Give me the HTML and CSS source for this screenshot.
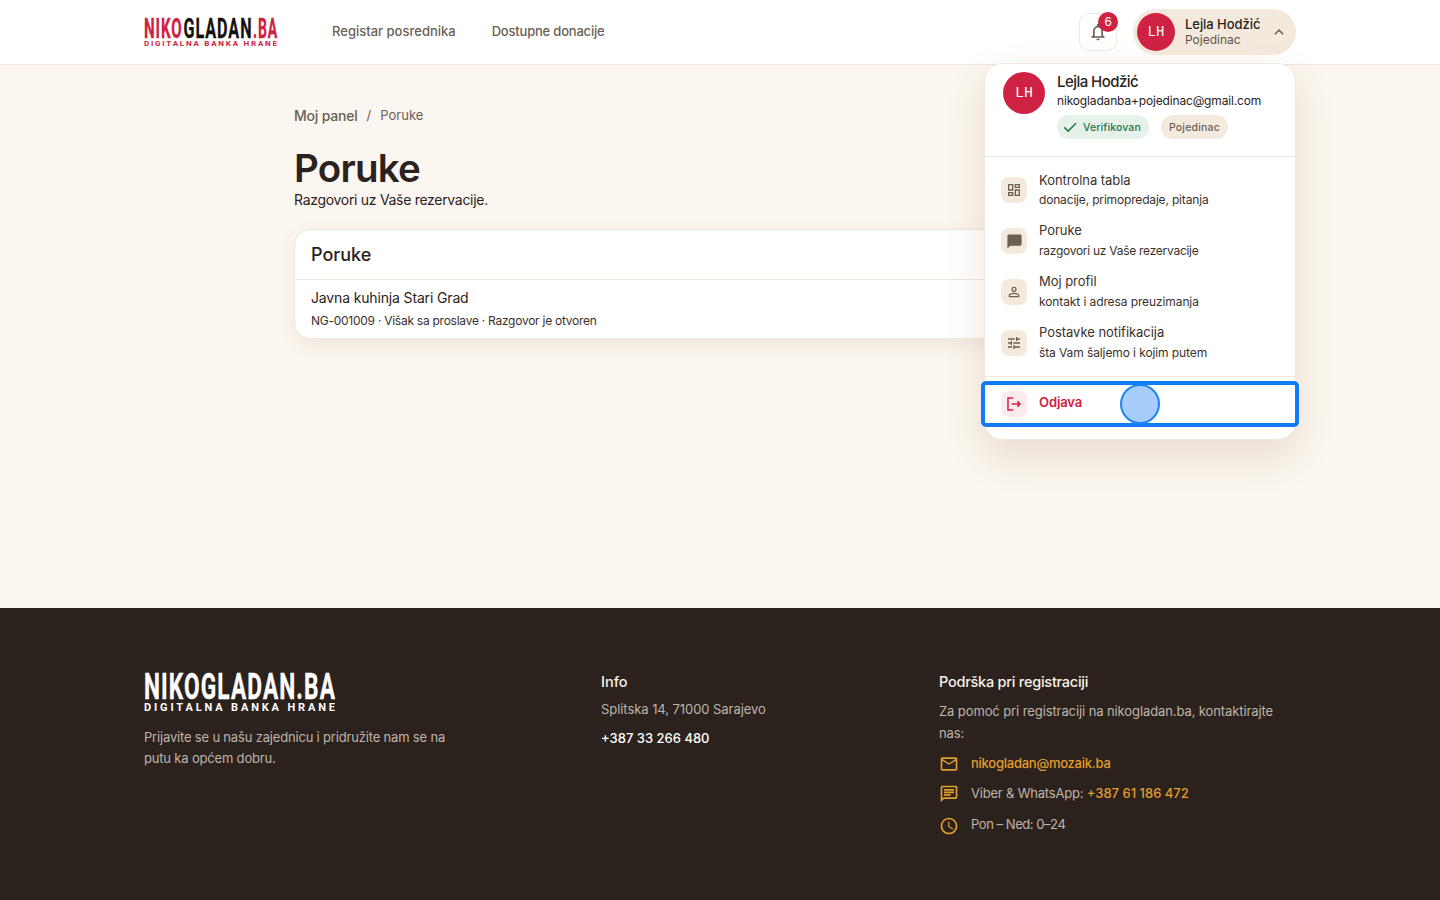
FILE: index.html
```html
<!DOCTYPE html>
<html lang="bs">
<head>
<meta charset="utf-8">
<title>Poruke</title>
<link rel="stylesheet" href="styles.css">
</head>
<body>
<header class="topbar">
  <div class="topbar-inner">
    <svg class="logo-top" width="136" height="44" viewBox="0 0 136 44">
      <text class="lg-main lg-red" x="0" y="27.500" textLength="38.500" lengthAdjust="spacingAndGlyphs">NIKO</text>
      <text class="lg-main lg-black" x="39.500" y="27.500" textLength="69" lengthAdjust="spacingAndGlyphs">GLADAN</text>
      <text class="lg-main lg-red" x="109" y="27.500" textLength="25" lengthAdjust="spacingAndGlyphs">.BA</text>
      <text class="lg-sub lg-red" x="0" y="35.700" textLength="133" lengthAdjust="spacing">DIGITALNA BANKA HRANE</text>
    </svg>
    <nav class="mainnav">
      <a>Registar posrednika</a>
      <a>Dostupne donacije</a>
    </nav>
    <div class="spacer"></div>
    <button class="bell">
      <svg width="20" height="20" viewBox="0 0 24 24"><path fill="#6b5f56" d="M12 22c1.100 0 2-.9 2-2h-4c0 1.100.9 2 2 2zm6-6v-5c0-3.070-1.630-5.640-4.500-6.320V4c0-.830-.670-1.500-1.500-1.500s-1.500.670-1.500 1.500v.680C7.640 5.360 6 7.920 6 11v5l-2 2v1h16v-1l-2-2zm-2 1H8v-6c0-2.480 1.510-4.500 4-4.500s4 2.020 4 4.500v6z"/></svg>
      <span class="badge">6</span>
    </button>
    <div class="userchip">
      <span class="avatar avatar-sm">LH</span>
      <span class="chip-text"><b>Lejla Hodžić</b><span>Pojedinac</span></span>
      <svg width="18" height="18" viewBox="0 0 24 24"><path fill="none" stroke="#6b5f56" stroke-width="2" d="M6.500 15l5.500-5.500 5.500 5.500"/></svg>
    </div>
  </div>
</header>

<main class="content">
  <div class="crumbs"><b>Moj panel</b><i>/</i><span>Poruke</span></div>
  <h1>Poruke</h1>
  <p class="lead">Razgovori uz Vaše rezervacije.</p>
  <section class="card">
    <h2>Poruke</h2>
    <div class="row">
      <h3>Javna kuhinja Stari Grad</h3>
      <p>NG-001009 · Višak sa proslave · Razgovor je otvoren</p>
    </div>
  </section>
</main>

<div class="menu">
  <div class="menu-head">
    <span class="avatar avatar-lg">LH</span>
    <div class="menu-id">
      <div class="menu-name">Lejla Hodžić</div>
      <div class="menu-mail">nikogladanba+pojedinac@gmail.com</div>
      <div class="pills">
        <span class="pill pill-green"><svg width="18" height="18" viewBox="0 0 24 24"><path fill="none" stroke="#23774f" stroke-width="2" d="M4.500 12.500l5 5L20 7"/></svg>Verifikovan</span>
        <span class="pill pill-sand">Pojedinac</span>
      </div>
    </div>
  </div>
  <div class="menu-list">
    <a class="item">
      <span class="ico"><svg width="16" height="16" viewBox="0 0 24 24"><path fill="#6b5f56" d="M19 5v2h-4V5h4M9 5v6H5V5h4m10 8v6h-4v-6h4M9 17v2H5v-2h4M21 3h-8v6h8V3zM11 3H3v10h8V3zm10 8h-8v10h8V11zm-10 4H3v6h8v-6z"/></svg></span>
      <span class="item-text"><b>Kontrolna tabla</b><small>donacije, primopredaje, pitanja</small></span>
    </a>
    <a class="item">
      <span class="ico"><svg width="17" height="17" viewBox="0 0 24 24"><path fill="#6b5f56" d="M20 2H4c-1.100 0-2 .9-2 2v18l4-4h14c1.100 0 2-.9 2-2V4c0-1.100-.9-2-2-2z"/></svg></span>
      <span class="item-text"><b>Poruke</b><small class="tight">razgovori uz Vaše rezervacije</small></span>
    </a>
    <a class="item">
      <span class="ico"><svg width="16" height="16" viewBox="0 0 24 24"><path fill="#6b5f56" d="M12 5.900a2.100 2.100 0 1 1 0 4.200 2.100 2.100 0 0 1 0-4.200m0 9c2.970 0 6.100 1.460 6.100 2.100v1.100H5.900V17c0-.640 3.130-2.100 6.100-2.100M12 4C9.790 4 8 5.790 8 8s1.790 4 4 4 4-1.790 4-4-1.790-4-4-4zm0 9c-2.670 0-8 1.340-8 4v3h16v-3c0-2.660-5.330-4-8-4z"/></svg></span>
      <span class="item-text"><b>Moj profil</b><small class="loose">kontakt i adresa preuzimanja</small></span>
    </a>
    <a class="item">
      <span class="ico"><svg width="16" height="16" viewBox="0 0 24 24"><path fill="#6b5f56" d="M3 17v2h6v-2H3zM3 5v2h10V5H3zm10 16v-2h8v-2h-8v-2h-2v6h2zM7 9v2H3v2h4v2h2V9H7zm14 4v-2H11v2h10zm-6-4h2V7h4V5h-4V3h-2v6z"/></svg></span>
      <span class="item-text"><b>Postavke notifikacija</b><small class="loose">šta Vam šaljemo i kojim putem</small></span>
    </a>
  </div>
  <div class="menu-foot">
    <a class="item item-logout">
      <span class="ico ico-red"><svg width="18" height="18" viewBox="0 0 24 24"><path fill="none" stroke="#cf2142" stroke-width="2" d="M11 4H4v16h7M9 12h11M16.500 8.500l3.500 3.500-3.500 3.500"/></svg></span>
      <span class="item-text"><b>Odjava</b></span>
    </a>
  </div>
  <span class="focus-dot"></span>
</div>

<footer class="footer">
  <div class="footer-inner">
    <div class="f-brand">
      <svg class="logo-foot" width="194" height="46" viewBox="0 0 194 46">
        <text class="lg-main-f" x="0" y="27.300" textLength="192" lengthAdjust="spacingAndGlyphs">NIKOGLADAN.BA</text>
        <text class="lg-sub-f" x="0" y="39" textLength="191" lengthAdjust="spacing">DIGITALNA BANKA HRANE</text>
      </svg>
      <p>Prijavite se u našu zajednicu i pridružite nam se na putu ka općem dobru.</p>
    </div>
    <div class="f-info">
      <h4>Info</h4>
      <p class="addr">Splitska 14, 71000 Sarajevo</p>
      <p class="phone">+387 33 266 480</p>
    </div>
    <div class="f-support">
      <h4 class="h4-tight">Podrška pri registraciji</h4>
      <p class="help">Za pomoć pri registraciji na nikogladan.ba, kontaktirajte nas:</p>
      <div class="f-line f-line-mail">
        <svg width="20" height="20" viewBox="0 0 24 24"><path fill="#e19d2d" d="M20 4H4c-1.100 0-2 .9-2 2v12c0 1.100.9 2 2 2h16c1.100 0 2-.9 2-2V6c0-1.100-.9-2-2-2zm0 14H4V8l8 5 8-5v10zm-8-7L4 6h16l-8 5z"/></svg>
        <a class="accent">nikogladan@mozaik.ba</a>
      </div>
      <div class="f-line f-line-chat">
        <svg width="20" height="20" viewBox="0 0 24 24"><path fill="#e19d2d" d="M20 2H4c-1.100 0-2 .9-2 2v18l4-4h14c1.100 0 2-.9 2-2V4c0-1.100-.9-2-2-2zm0 14H5.170L4 17.170V4h16v12zM6 12h8v2H6zM6 9h12v2H6zM6 6h12v2H6z"/></svg>
        <span>Viber &amp; WhatsApp: <a class="accent">+387 61 186 472</a></span>
      </div>
      <div class="f-line f-line-clock">
        <svg width="20" height="20" viewBox="0 0 24 24"><path fill="#e19d2d" d="M11.990 2C6.470 2 2 6.480 2 12s4.470 10 9.990 10C17.520 22 22 17.520 22 12S17.520 2 11.990 2zM12 20c-4.420 0-8-3.580-8-8s3.580-8 8-8 8 3.580 8 8-3.580 8-8 8zm.5-13H11v6l5.250 3.150.75-1.230-4.500-2.670z"/></svg>
        <span class="hours">Pon – Ned: 0–24</span>
      </div>
    </div>
  </div>
</footer>
</body>
</html>
```

FILE: styles.css
```css
* { box-sizing: border-box; }
html, body { margin: 0; padding: 0; }
body {
  position: relative;
  min-height: 900px;
  display: flex;
  flex-direction: column;
  background: #fbf6ef;
  color: #2b221d;
  font-family: "Inter", "Liberation Sans", sans-serif;
  overflow: hidden;
}
b { font-weight: 500; }
p, h1, h2, h3, h4 { margin: 0; }

.topbar { height: 65px; flex: none; background: #fff; border-bottom: 1px solid #f1e6d9; }
.topbar-inner { width: 1152px; height: 64px; margin: 0 auto; display: flex; align-items: center; }
.logo-top { display: block; flex: none; }
.lg-main { font: 700 27.500px "Roboto", sans-serif; stroke-width: .35px; letter-spacing: .06em; }
.lg-sub { font: 700 8px "Roboto", sans-serif; }
.lg-red { fill: #cf2142; stroke: #cf2142; }
.lg-sub.lg-red { stroke: none; }
.lg-black { fill: #15110f; stroke: #15110f; }
.mainnav { display: flex; gap: 36px; margin-left: 52px; transform: translateY(-1px); }
.mainnav a { font-size: 13px; font-weight: 500; color: #6b5f56; }
.mainnav a + a { letter-spacing: -0.2px; }
.spacer { flex: 1; }
.bell {
  position: relative; width: 38px; height: 38px; padding: 0; background: #fff;
  border: 1px solid #f1e6d9; border-radius: 10px; display: flex; align-items: center; justify-content: center;
}
.badge {
  position: absolute; top: -2px; right: -2px; width: 20px; height: 20px; border-radius: 50%;
  background: #cf2142; color: #fff; font-size: 13px; line-height: 20px; text-align: center;
}
.userchip {
  margin-left: 16px; width: 163px; height: 46px; padding: 4px 8px 4px 4px; border-radius: 23px;
  background: #f3eadd; display: flex; align-items: center;
}
.userchip svg { margin-left: auto; }
.avatar {
  flex: none; display: flex; align-items: center; justify-content: center; border-radius: 50%;
  background: #cf2142; color: #fff; font-family: "Liberation Mono", monospace; font-weight: 400;
}
.avatar-sm { width: 38px; height: 38px; font-size: 14px; }
.avatar-lg { width: 42px; height: 42px; font-size: 15px; }
.chip-text { display: flex; flex-direction: column; margin-left: 10px; font-size: 12px; line-height: 16px; color: #5f544c; }
.chip-text b { font-size: 13px; color: #2b221d; letter-spacing: -0.05px; }

.content { flex: 1; width: 852px; margin: 0 auto; padding-top: 40px; }
.crumbs { display: flex; align-items: center; height: 20px; font-size: 13px; color: #6b5f56; }
.crumbs b { font-size: 14px; letter-spacing: -0.2px; }
.crumbs i { font-style: normal; margin: 0 9px; }
h1 { margin-top: 20px; font-size: 38.500px; line-height: 46px; font-weight: 600; letter-spacing: -0.800px; color: #2b221d; }
.lead { font-size: 14px; line-height: 18px; color: #2b221d; letter-spacing: -0.3px; }
.card {
  margin-top: 20px; height: 110px; background: #fff; border: 1px solid #f1e6d9; border-radius: 16px;
  box-shadow: 0 6px 20px rgba(120, 70, 30, .08); overflow: hidden;
}
.card h2 { height: 50px; padding: 0 16px; border-bottom: 1px solid #f1e6d9; font-size: 18px; font-weight: 500; line-height: 49px; }
.row { padding: 8px 16px; }
.row h3 { font-size: 14px; font-weight: 400; line-height: 20px; letter-spacing: -0.15px; }
.row p { margin-top: 5px; font-size: 12px; line-height: 16px; color: #3b312b; letter-spacing: -0.26px; }

.menu {
  position: absolute; left: 984px; top: 63px; width: 312px; height: 377px; background: #fff;
  border: 1px solid #f1e6d9; border-radius: 18px; box-shadow: 0 16px 40px rgba(120, 70, 30, .14);
}
.menu-head { display: flex; gap: 12px; height: 93px; padding: 8px 18px 0; border-bottom: 1px solid #f1e6d9; }
.menu-name { font-size: 15px; font-weight: 500; line-height: 20px; letter-spacing: -0.55px; }
.menu-mail { font-size: 12px; line-height: 18px; letter-spacing: -0.16px; }
.pills { display: flex; gap: 12px; margin-top: 5px; }
.pill { display: inline-flex; align-items: center; gap: 4px; height: 24px; padding: 0 8px 0 4px; border-radius: 12px; font-size: 10.500px; font-weight: 500; letter-spacing: .12px; }
.pill-green { background: #e6f1ea; color: #23774f; }
.pill-sand { background: #f3eadd; color: #6b5f56; padding-left: 8px; letter-spacing: .2px; }
.menu-list { display: flex; flex-direction: column; gap: 1px; padding: 8px 16px 0; height: 220px; border-bottom: 1px solid #f1e6d9; }
.item { display: flex; align-items: center; gap: 12px; height: 50px; }
.ico { flex: none; width: 26px; height: 26px; border-radius: 8px; background: #f3eadd; display: flex; align-items: center; justify-content: center; }
.ico-red { background: #fcebee; }
.item-text { display: flex; flex-direction: column; font-size: 13px; }
.item-text b { font-weight: 400; line-height: 20px; color: #3b312b; letter-spacing: -0.04px; }
.item-text small { font-size: 12px; line-height: 20px; color: #3b312b; letter-spacing: -0.17px; }
.item-text small.tight { letter-spacing: -0.27px; }
.item-text small.loose { letter-spacing: -0.1px; }
.item:not(:first-child) .item-text { padding-bottom: 1px; }
.item:not(:first-child) .item-text small { margin-top: 1px; }
.menu-foot { margin: 4px -4px 0; height: 46px; padding: 0 16px; border: 4px solid #0f7cf6; border-radius: 5px; display: flex; align-items: center; }
.item-logout { height: 30px; }
.item-logout .item-text { padding-bottom: 4px; }
.item-logout b { color: #cf2142; font-weight: 600; letter-spacing: -0.1px; }
.focus-dot {
  position: absolute; left: 135px; top: 320px; width: 40px; height: 40px; border-radius: 50%;
  background: rgba(80, 155, 250, .5); border: 2px solid #1f85f5;
}

.footer { height: 292px; flex: none; background: #2b221d; color: #bfb5aa; font-size: 13px; }
.footer-inner { width: 1152px; margin: 0 auto; padding-top: 64px; display: flex; }
.logo-foot { display: block; }
.lg-main-f { font: 700 37px "Roboto", sans-serif; fill: #fff; stroke: #fff; stroke-width: .4px; letter-spacing: .05em; }
.lg-sub-f { font: 700 11px "Roboto", sans-serif; fill: #fff; }
.f-brand { width: 457px; }
.f-brand p { margin-top: 9px; width: 320px; line-height: 21px; letter-spacing: -0.18px; }
.f-info { width: 338px; }
.f-support { flex: 1; }
h4 { font-size: 14.500px; line-height: 20px; font-weight: 500; color: #f7f1ea; }
.h4-tight { letter-spacing: -0.25px; }
.addr { margin-top: 7px; line-height: 20px; letter-spacing: -0.06px; }
.phone { margin-top: 9px; line-height: 20px; color: #fff; font-weight: 500; }
.help { margin-top: 8px; line-height: 22px; letter-spacing: -0.1px; }
.f-line { display: flex; align-items: flex-start; gap: 12px; height: 20px; margin-top: 9px; line-height: 20px; }
.f-line svg { flex: none; margin-top: 1px; }
.f-line-chat { margin-top: 10px; letter-spacing: -0.2px; }
.f-line-clock { margin-top: 11px; }
.f-line-clock svg { margin-top: 2px; }
.hours { letter-spacing: -0.45px; }
.accent { color: #e19d2d; font-weight: 500; letter-spacing: -0.25px; }
.f-line-chat .accent { letter-spacing: 0; }
```
